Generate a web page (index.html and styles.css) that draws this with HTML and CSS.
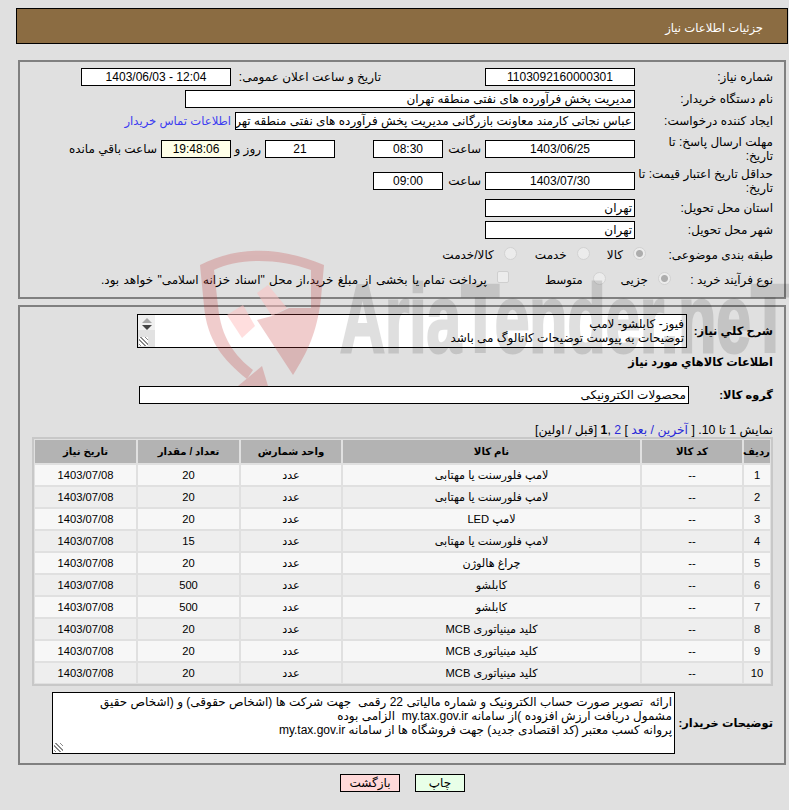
FILE: index.html
```html
<!DOCTYPE html>
<html lang="fa" dir="rtl">

<head>
    <meta charset="UTF-8">
    <title>جزئیات اطلاعات نیاز</title>
    <link rel="stylesheet" href="styles.css">
</head>

<body>
    <svg class="watermark" width="600" height="138" viewBox="0 0 600 138" aria-hidden="true">
        <g class="wm-shield">
            <path d="M7 17 C45 -2 85 -2 131 17 L128 50 C124 85 114 105 100 127 L64 72 L79 68 L96 60 L118 60 L118 22 C85 10 45 10 21 22 L25 58 C28 90 42 108 60 122 L54 131 C30 112 14 92 11 58 Z" />
            <polygon points="45,138 69,118 75,138" />
        </g>
        <polygon class="wm-gavel" points="34,67 50,57 62,78 49,90" />
        <polygon class="wm-gavel" points="64,45 75,37 94,60 79,68" />
        <text class="wm-text" x="147" y="104" textLength="449" lengthAdjust="spacingAndGlyphs">AriaTender.neT</text>
    </svg>

    <div class="header">جزئیات اطلاعات نیاز</div>

    <div class="panel panel-info">
        <div class="row">
            <div class="label">شماره نیاز:</div>
            <div class="field w150 center">1103092160000301</div>
            <div class="text announce-label">تاریخ و ساعت اعلان عمومی:</div>
            <div class="field w150 center">12:04 - 1403/06/03</div>
        </div>
        <div class="row">
            <div class="label">نام دستگاه خریدار:</div>
            <div class="field w450">مدیریت پخش فرآورده های نفتی منطقه تهران</div>
        </div>
        <div class="row">
            <div class="label">ایجاد کننده درخواست:</div>
            <div class="field w400">عباس نجاتی کارمند معاونت بازرگانی مدیریت پخش فرآورده های نفتی منطقه تهران</div>
            <a class="contact-link" href="#">اطلاعات تماس خریدار</a>
        </div>
        <div class="row row-tall row-first">
            <div class="label label-wrap">مهلت ارسال پاسخ: تا تاریخ:</div>
            <div class="field w150 center">1403/06/25</div>
            <div class="text hour-label">ساعت</div>
            <div class="field w70 center">08:30</div>
            <div class="field w70 center days">21</div>
            <div class="text day-label">روز و</div>
            <div class="field w70 center timer">19:48:06</div>
            <div class="text remain-label">ساعت باقي مانده</div>
        </div>
        <div class="row row-tall">
            <div class="label">حداقل تاریخ اعتبار قیمت: تا تاریخ:</div>
            <div class="field w150 center">1403/07/30</div>
            <div class="text hour-label">ساعت</div>
            <div class="field w70 center">09:00</div>
        </div>
        <div class="row row-city">
            <div class="label">استان محل تحویل:</div>
            <div class="field w150">تهران</div>
        </div>
        <div class="row">
            <div class="label">شهر محل تحویل:</div>
            <div class="field w150">تهران</div>
        </div>
        <div class="row row-radio">
            <div class="label label-subject">طبقه بندی موضوعی:</div>
            <span class="radio checked"></span><span class="opt opt-goods">کالا</span>
            <span class="radio"></span><span class="opt opt-service">خدمت</span>
            <span class="radio"></span><span class="opt">کالا/خدمت</span>
        </div>
        <div class="row row-radio">
            <div class="label label-process">نوع فرآیند خرید :</div>
            <span class="radio checked"></span><span class="opt opt-minor">جزیی</span>
            <span class="radio"></span><span class="opt opt-medium">متوسط</span>
            <span class="check"></span><span class="opt opt-long">پرداخت تمام یا بخشی از مبلغ خرید،از محل "اسناد خزانه اسلامی" خواهد بود.</span>
        </div>
    </div>

    <div class="panel panel-goods">
        <div class="row row-desc">
            <div class="label label-bold label-desc">شرح کلي نیاز:</div>
            <div class="textbox textbox-desc">
                <div class="textbox-body">فیوز- کابلشو- لامپ<br>توضیحات به پیوست توضیحات کاتالوگ می باشد</div>
                <div class="scroll">
                    <span class="arrow-up"></span>
                    <span class="arrow-down"></span>
                    <span class="grip"></span>
                </div>
            </div>
        </div>

        <div class="section-title">اطلاعات کالاهاي مورد نیاز</div>

        <div class="row row-group">
            <div class="label label-bold label-group">گروه کالا:</div>
            <div class="field w550">محصولات الکترونیکی</div>
        </div>

        <div class="pager">نمایش 1 تا 10. [ <a href="#">آخرین / بعد</a> ] <a href="#">2</a> ,<b>1</b> [قبل / اولین]</div>

        <table class="items">
            <thead>
                <tr>
                    <th class="col-no">ردیف</th>
                    <th class="col-code">کد کالا</th>
                    <th class="col-name">نام کالا</th>
                    <th class="col-unit">واحد شمارش</th>
                    <th class="col-qty">تعداد / مقدار</th>
                    <th class="col-date">تاریخ نیاز</th>
                </tr>
            </thead>
            <tbody>
                <tr><td>1</td><td>--</td><td>لامپ فلورسنت یا مهتابی</td><td>عدد</td><td>20</td><td>1403/07/08</td></tr>
                <tr><td>2</td><td>--</td><td>لامپ فلورسنت یا مهتابی</td><td>عدد</td><td>20</td><td>1403/07/08</td></tr>
                <tr><td>3</td><td>--</td><td>لامپ LED</td><td>عدد</td><td>20</td><td>1403/07/08</td></tr>
                <tr><td>4</td><td>--</td><td>لامپ فلورسنت یا مهتابی</td><td>عدد</td><td>15</td><td>1403/07/08</td></tr>
                <tr><td>5</td><td>--</td><td>چراغ هالوژن</td><td>عدد</td><td>20</td><td>1403/07/08</td></tr>
                <tr><td>6</td><td>--</td><td>کابلشو</td><td>عدد</td><td>500</td><td>1403/07/08</td></tr>
                <tr><td>7</td><td>--</td><td>کابلشو</td><td>عدد</td><td>500</td><td>1403/07/08</td></tr>
                <tr><td>8</td><td>--</td><td>کلید مینیاتوری MCB</td><td>عدد</td><td>20</td><td>1403/07/08</td></tr>
                <tr><td>9</td><td>--</td><td>کلید مینیاتوری MCB</td><td>عدد</td><td>20</td><td>1403/07/08</td></tr>
                <tr><td>10</td><td>--</td><td>کلید مینیاتوری MCB</td><td>عدد</td><td>20</td><td>1403/07/08</td></tr>
            </tbody>
        </table>

        <div class="row row-notes">
            <div class="label label-bold label-notes">توضیحات خریدار:</div>
            <div class="textbox textbox-notes">
                <div class="textbox-body">ارائه&nbsp; تصویر صورت حساب الکترونیک و شماره مالیاتی 22 رقمی&nbsp; جهت شرکت ها (اشخاص حقوقی) و (اشخاص حقیق<br>مشمول دریافت ارزش افزوده )از سامانه my.tax.gov.ir&nbsp; الزامی بوده<br>پروانه کسب معتبر (کد اقتصادی جدید) جهت فروشگاه ها از سامانه my.tax.gov.ir</div>
                <span class="grip"></span>
            </div>
        </div>
    </div>

    <div class="actions">
        <button class="btn btn-print">چاپ</button>
        <button class="btn btn-back">بازگشت</button>
    </div>
</body>

</html>
```

FILE: styles.css
```css
html {
    background: #e0e0e0;
}

body {
    position: relative;
    margin: 0;
    width: 789px;
    height: 810px;
    padding-top: 8px;
    box-sizing: border-box;
    overflow: hidden;
    font-family: "Liberation Sans", "DejaVu Sans", sans-serif;
    font-size: 12px;
    line-height: 14px;
    color: #000;
}

/* logo laid over the form, tints whatever is under it */
.watermark {
    position: absolute;
    left: 193px;
    top: 248px;
    z-index: 2;
    direction: ltr;
    pointer-events: none;
}

.wm-shield {
    fill: #c43838;
    opacity: 0.25;
}

.wm-gavel {
    fill: #ffbebe;
    opacity: 0.5;
}

.wm-text {
    fill: #000;
    stroke: #000;
    stroke-width: 3;
    opacity: 0.12;
    font-family: "Liberation Sans", sans-serif;
    font-size: 96px;
    font-weight: bold;
}

.header {
    margin-right: 1px;
    margin-left: 16px;
    height: 36px;
    box-sizing: border-box;
    border: 1px solid #000;
    background: #8b6c42;
    color: #fff;
    padding: 12px 24px 0 0;
    font-size: 11.6px;
}

.panel {
    margin: 0 3px 0 0;
    margin-left: 18px;
    border: 2px solid #808080;
    box-sizing: border-box;
}

.panel-info {
    margin-top: 16px;
    height: 239px;
    padding-top: 6px;
}

.panel-goods {
    margin-top: 6px;
    height: 460px;
    padding-top: 7px;
}

.row {
    display: flex;
    align-items: center;
    height: 18px;
    margin-bottom: 4px;
}

.row-tall {
    height: 30px;
    margin-bottom: 2px;
}

.row-first {
    margin-top: 3px;
}

.row-city {
    margin-top: 3px;
}

.row-radio {
    margin-top: 7px;
    margin-bottom: 7px;
}

.label {
    width: 149px;
    flex: none;
    box-sizing: border-box;
    padding-right: 11px;
}

.label-wrap {
    padding-left: 24px;
}

.label-subject {
    width: 138px;
}

.label-process {
    width: 113px;
}

.label-bold {
    font-weight: bold;
    font-size: 11.4px;
    white-space: nowrap;
}

.label-desc {
    width: 97px;
}

.label-group {
    width: 95px;
}

.label-notes {
    width: 109px;
}

.field {
    height: 18px;
    box-sizing: border-box;
    border: 1px solid #000;
    background: #fff;
    padding: 1px 2px 0;
    white-space: nowrap;
    overflow: hidden;
    flex: none;
}

.center {
    text-align: center;
}

.w70 {
    width: 70px;
}

.w150 {
    width: 150px;
}

.w400 {
    width: 400px;
}

.w450 {
    width: 450px;
}

.w550 {
    width: 550px;
}

.text {
    flex: none;
}

.announce-label {
    width: 150px;
    margin-right: 104px;
}

.hour-label {
    width: 42px;
    padding-right: 4px;
    box-sizing: border-box;
}

.days {
    margin-right: 38px;
}

.day-label {
    width: 34px;
    padding-right: 4px;
    box-sizing: border-box;
}

.timer {
    background: #ffffe8;
}

.remain-label {
    padding-right: 4px;
}

.contact-link {
    margin-right: 4px;
    color: #3c3cf0;
    font-size: 11.6px;
    text-decoration: none;
}

.radio {
    width: 13px;
    height: 13px;
    flex: none;
    box-sizing: border-box;
    border: 1px solid #d2d2d2;
    border-radius: 50%;
    background: #ececec;
    margin-top: -4px;
}

.radio.checked {
    background: radial-gradient(circle, #adadad 0 3px, #ececec 4px);
}

.check {
    width: 12px;
    height: 12px;
    flex: none;
    box-sizing: border-box;
    border: 1px solid #cfcfcf;
    border-radius: 2px;
    background: #ececec;
    margin-top: -6px;
}

.opt {
    padding-right: 10px;
    flex: none;
}

.opt-goods {
    margin-left: 17px;
}

.opt-service {
    margin-left: 18px;
}

.opt-minor {
    margin-left: 15px;
}

.opt-medium {
    margin-left: 36px;
}

.opt-long {
    word-spacing: 1px;
}

.textbox {
    position: relative;
    display: flex;
    box-sizing: border-box;
    border: 1px solid #000;
    background: #fff;
    flex: none;
}

.textbox-body {
    flex: 1;
    padding: 2px 2px 0;
    overflow: hidden;
    white-space: nowrap;
}

.textbox-desc {
    width: 550px;
    height: 34px;
}

.textbox-notes {
    width: 623px;
    height: 62px;
}

.scroll {
    position: relative;
    width: 17px;
    flex: none;
    background: linear-gradient(#f0f0f0 0 15px, #e2e2e2 15px);
}

.arrow-up,
.arrow-down {
    position: absolute;
    left: 4px;
    width: 0;
    height: 0;
    border-left: 5px solid transparent;
    border-right: 5px solid transparent;
}

.arrow-up {
    top: 3px;
    border-bottom: 5px solid #a8a8a8;
}

.arrow-down {
    top: 10px;
    border-top: 5px solid #444;
}

.grip {
    position: absolute;
    left: 1px;
    bottom: 1px;
    width: 9px;
    height: 9px;
    background: repeating-linear-gradient(45deg, #fff 0 1px, #8a8a8a 1px 2px, #fff 2px 3px);
}

.row-desc {
    height: 34px;
    margin-bottom: 7px;
}

.section-title {
    height: 14px;
    padding-right: 11px;
    font-weight: bold;
    font-size: 11.4px;
}

.row-group {
    margin-top: 17px;
    margin-bottom: 19px;
}

.pager {
    padding-right: 11px;
    height: 14px;
    font-size: 12.3px;
}

.pager a {
    color: #2a2ad8;
    text-decoration: none;
}

.items {
    margin: 0 11px 0 0;
    width: 741px;
    table-layout: fixed;
    border-collapse: separate;
    border-spacing: 2px;
    border: 1px solid #c8c8c8;
    box-shadow: inset 0 0 0 1px #c8c8c8;
    font-size: 11.2px;
}

.items th {
    height: 23px;
    padding: 0;
    background: #b3b3b3;
    font-weight: bold;
    font-size: 10.2px;
}

.items td {
    height: 20px;
    padding: 0;
    text-align: center;
    background: #f7f7f7;
}

.items tbody tr:nth-child(even) td {
    background: #eeeeee;
}

.col-no {
    width: 26px;
}

.col-code {
    width: 100px;
}

.col-name {
    width: 297px;
}

.col-unit {
    width: 100px;
}

.col-qty {
    width: 101px;
}

.col-date {
    width: 101px;
}

.row-notes {
    height: 62px;
    margin-top: 6px;
    margin-bottom: 0;
}

.actions {
    display: flex;
    justify-content: center;
    gap: 15px;
    margin-top: 9px;
    margin-left: 16px;
}

.btn {
    height: 18px;
    padding: 0;
    box-sizing: border-box;
    border: 1px solid #000;
    font: inherit;
    color: #000;
}

.btn-print {
    width: 50px;
    background: #e8ffe8;
}

.btn-back {
    width: 60px;
    background: #ffd9d9;
}
```
